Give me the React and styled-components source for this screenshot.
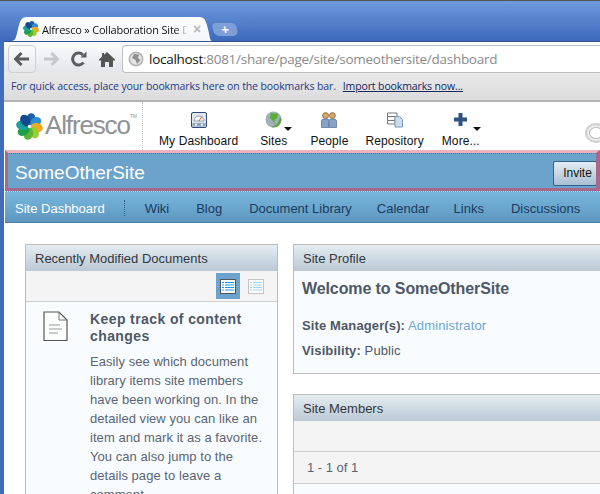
import React from 'react';
import styled, { createGlobalStyle } from 'styled-components';

const GlobalStyle = createGlobalStyle`
    html, body {
        margin: 0;
        padding: 0;
        background: #fff;
    }
    body {
        font-family: "Liberation Sans", Arial, sans-serif;
    }
`;

const PETALS = ['#1d5fa8', '#2f8fd0', '#f4a81c', '#9ccb3a', '#5bb531', '#1e9e4a', '#17a2a0', '#12498f'];

const Flower = ({ size }) => (
    <svg width={size} height={size} viewBox="0 0 32 32">
        {PETALS.map((color, i) => (
            <ellipse key={color} cx="16" cy="7.5" rx="5.6" ry="7.5" fill={color} transform={`rotate(${i * 45 + 10} 16 16)`} />
        ))}
        <circle cx="16" cy="16" r="2" fill="#fff" />
    </svg>
);

const BackIcon = () => (
    <svg width="16" height="14" viewBox="0 0 16 14">
        <path d="M7.5 1 L1.5 7 L7.5 13 M2 7 H15" fill="none" stroke="#5c5c5c" strokeWidth="3" />
    </svg>
);

const ForwardIcon = () => (
    <svg width="16" height="14" viewBox="0 0 16 14">
        <path d="M8.5 1 L14.5 7 L8.5 13 M14 7 H1" fill="none" stroke="#c4c6c8" strokeWidth="3" />
    </svg>
);

const ReloadIcon = () => (
    <svg width="16" height="16" viewBox="0 0 16 16">
        <path d="M12.5 11.5 A6 6 0 1 1 12 4" fill="none" stroke="#5c5c5c" strokeWidth="3" />
        <path d="M9.5 6.5 H15.5 V0.5 Z" fill="#5c5c5c" />
    </svg>
);

const HomeIcon = () => (
    <svg width="16" height="15" viewBox="0 0 16 15">
        <path d="M8 0 L16 7.5 V8.5 H14 V15 H10 V10 H6 V15 H2 V8.5 H0 V7.5 L3 4.6 V1 H5 V2.8 Z" fill="#555" />
    </svg>
);

const GlobeSmall = () => (
    <svg width="16" height="16" viewBox="0 0 16 16">
        <circle cx="8" cy="8" r="7.5" fill="#b4b4b4" />
        <circle cx="8" cy="8" r="5.8" fill="#e6e6e6" />
        <path d="M6 3 L11 3.5 L10 7 L12.5 9 L9 13 L7.5 9 L4 7 Z" fill="#8e8e8e" />
    </svg>
);

const DashboardIcon = () => (
    <svg width="16" height="16" viewBox="0 0 16 16">
        <rect x="0.5" y="0.5" width="15" height="15" rx="1.5" fill="#dfe6ee" stroke="#2d4a78" />
        <path d="M3 9 A5 5 0 0 1 13 9 Z" fill="#fff" stroke="#7b8ba0" strokeWidth="0.8" />
        <path d="M8 9 L11 4.5" stroke="#d8492a" strokeWidth="1" />
        <rect x="1.5" y="11" width="13" height="3.5" fill="#8ea2bb" />
        <circle cx="5" cy="12.7" r="1.1" fill="#fff" />
        <circle cx="11" cy="12.7" r="1.1" fill="#fff" />
    </svg>
);

const GlobeIcon = () => (
    <svg width="17" height="17" viewBox="0 0 17 17">
        <circle cx="8.5" cy="8.5" r="8" fill="#9fb0b8" />
        <path d="M16.5 8.5 A8 8 0 0 1 6 16 C11 15 14 12 15 6 Z" fill="#5aa43a" />
        <path d="M6 2 L13 3 L12 7 L9.5 9 L10 13 L8 10 L5 7 Z" fill="#58b02e" />
    </svg>
);

const PeopleIcon = () => (
    <svg width="16" height="16" viewBox="0 0 16 16">
        <circle cx="4.6" cy="3.6" r="3" fill="#d2a76a" stroke="#8a5a2a" strokeWidth="0.7" />
        <circle cx="11.4" cy="3.6" r="3" fill="#d2a76a" stroke="#8a5a2a" strokeWidth="0.7" />
        <path d="M0.5 15.5 V9 Q0.5 7 3 7 H6.5 Q7.8 7 7.8 9 V15.5 Z" fill="#86a4c8" stroke="#4f6d92" strokeWidth="0.7" />
        <path d="M8.2 15.5 V9 Q8.2 7 10 7 H13 Q15.5 7 15.5 9 V15.5 Z" fill="#86a4c8" stroke="#4f6d92" strokeWidth="0.7" />
    </svg>
);

const RepositoryIcon = () => (
    <svg width="16" height="16" viewBox="0 0 16 16">
        <path d="M0.5 1 H10 V4.5 H0.5 Z M0.5 4.5 H8 V8.5 H0.5 Z M0.5 8.5 H8 V12 H0.5 Z" fill="#fff" stroke="#777" />
        <path d="M8 4.5 H12.5 L15.5 7.5 V15 H8 Z" fill="#c9dcf0" stroke="#7f99b8" />
    </svg>
);

const PlusIcon = () => (
    <svg width="13" height="13" viewBox="0 0 13 13">
        <path d="M4.5 0 H8.5 V4.5 H13 V8.5 H8.5 V13 H4.5 V8.5 H0 V4.5 H4.5 Z" fill="#2e5382" />
    </svg>
);

const DocIcon = () => (
    <svg width="25" height="31" viewBox="0 0 25 31">
        <path d="M1 1 H16 L24 9 V29.5 H1 Z" fill="#fbfcfc" stroke="#555" strokeWidth="1.2" />
        <path d="M16 1 V9 H24" fill="none" stroke="#777" />
        <path d="M6 14 H17 M6 18 H19 M6 22 H15" stroke="#999" strokeWidth="1" />
    </svg>
);

const ListIcon = ({ muted }) => (
    <svg width="16" height="15" viewBox="0 0 16 15">
        <rect x="0.5" y="0.5" width="15" height="14" fill={muted ? '#fafcfe' : '#fff'} stroke={muted ? '#c4c4c4' : '#555'} />
        <path
            d="M5 3.5 H14 M5 6 H14 M5 8.5 H14 M5 11 H14 M2 3.5 H4 M2 6 H4 M2 8.5 H4 M2 11 H4"
            stroke={muted ? '#9fd4f5' : '#1a97ef'}
            strokeWidth="1.2"
        />
    </svg>
);

const Shot = styled.div`
    position: relative;
    width: 600px;
    height: 494px;
    overflow: hidden;
    background: #3f6cbd;
    border-top: 1px solid #555;
    box-sizing: border-box;
    padding-left: 4px;
`;

const TabStrip = styled.div`
    height: 40px;
    margin-left: -4px;
    padding: 16px 0 0 11px;
    box-sizing: border-box;
    display: flex;
    align-items: flex-end;
    background: linear-gradient(#6f9ade, #3c69bb);
`;

const Tab = styled.div`
    width: 201px;
    height: 24px;
    padding: 0 0 0 12px;
    box-sizing: border-box;
    display: flex;
    align-items: center;
    gap: 3px;
    background: linear-gradient(#fff, #f3f5f9);
    clip-path: path('M0 24 C5 24 5 20 7 12 C9 4 10 0 16 0 H188 C194 0 195 4 197 12 C199 20 199 24 201 24 Z');
`;

const TabLabel = styled.span`
    width: 146px;
    white-space: nowrap;
    font-family: "Open Sans", sans-serif;
    font-size: 11px;
    letter-spacing: -0.2px;
    color: #111;
    mask-image: linear-gradient(to right, #000 134px, transparent 146px);
`;

const TabClose = styled.span`
    font-size: 14px;
    color: #b8b8b8;
    font-weight: bold;
    margin-left: 2px;
`;

const NewTab = styled.div`
    width: 24px;
    height: 13px;
    margin: 0 0 5px 1px;
    display: flex;
    align-items: center;
    justify-content: center;
    border-radius: 4px 4px 5px 5px;
    color: #fff;
    font-size: 13px;
    font-weight: bold;
    background: #7d9ed8;
    transform: skewX(12deg);
`;

const Toolbar = styled.div`
    height: 31px;
    padding: 3px 0 0 4px;
    box-sizing: border-box;
    display: flex;
    align-items: flex-start;
    background: linear-gradient(#fbfcfe, #e3e5e8);
    border-top: 1px solid #33558f;
`;

const BackButton = styled.div`
    width: 26px;
    height: 26px;
    display: flex;
    align-items: center;
    justify-content: center;
    border: 1px solid #cdcfd2;
    border-radius: 4px;
    background: linear-gradient(#fafbfc, #e6e7e9);
`;

const ToolButton = styled.div`
    width: ${(p) => p.$w}px;
    height: 28px;
    display: flex;
    align-items: center;
    justify-content: center;
`;

const UrlBox = styled.div`
    flex: 1;
    height: 26px;
    margin-left: 2px;
    padding-left: 5px;
    display: flex;
    align-items: center;
    gap: 5px;
    background: #fff;
    border: 1px solid #bcbec2;
    border-right: 0;
    border-radius: 4px 0 0 4px;
`;

const UrlText = styled.span`
    font-family: "Open Sans", sans-serif;
    font-size: 13.5px;
    letter-spacing: -0.28px;
    color: #8a8a8a;
    white-space: nowrap;

    b {
        font-weight: normal;
        color: #111;
    }
`;

const BookmarkBar = styled.div`
    height: 28px;
    padding-left: 7px;
    display: flex;
    align-items: center;
    gap: 7px;
    background: linear-gradient(#e9e9e9, #dcdcdc);
    font-family: "Open Sans", sans-serif;
    font-size: 10.5px;
    letter-spacing: -0.12px;
    color: #1f3a86;
    white-space: nowrap;
`;

const ImportLink = styled.a`
    color: #12285f;
    text-decoration: underline;
`;

const Page = styled.div`
    background: #fff;
    border-top: 2px solid #b4b4b4;
    height: 393px;
`;

const TopBar = styled.div`
    height: 48px;
    display: flex;
`;

const LogoCell = styled.div`
    width: 139px;
    padding-left: 12px;
    box-sizing: border-box;
    display: flex;
    align-items: center;
    gap: 2px;
    border-right: 1px dotted #c8c8c8;
`;

const LogoText = styled.span`
    font-size: 26px;
    letter-spacing: -1.15px;
    color: #8f9294;
    position: relative;
    top: -1px;

    sup {
        font-size: 5px;
        letter-spacing: 0;
        vertical-align: 16px;
    }
`;

const MainNav = styled.div`
    flex: 1;
    display: flex;
    padding-left: 16px;
`;

const MainItem = styled.div`
    position: relative;
    display: flex;
    flex-direction: column;
    align-items: center;
    justify-content: flex-end;
    height: 46px;
    gap: 6px;
    margin-left: ${(p) => p.$gap || 0}px;
    font-size: 12px;
    letter-spacing: 0.1px;
    color: #111;
    white-space: nowrap;
`;

const IconSlot = styled.div`
    height: 17px;
    display: flex;
    align-items: center;
`;

const Caret = styled.span`
    position: absolute;
    right: ${(p) => p.$right}px;
    top: 25px;
    width: 0;
    height: 0;
    border: 4px solid transparent;
    border-top-color: #111;
    border-bottom: 0;
`;

const SearchRing = styled.div`
    position: absolute;
    left: 585px;
    top: 122px;
    width: 22px;
    height: 20px;
    border-radius: 50%;
    border: 2px solid #d0d0d0;
    box-sizing: border-box;
    background: #fff;
    box-shadow: inset 0 0 0 2px #eee, inset 0 0 0 3px #b8b8b8;
`;

const TitleBar = styled.div`
    position: relative;
    height: 41px;
    margin-left: 1px;
    padding: 5px 3px 0 10px;
    box-sizing: border-box;
    display: flex;
    align-items: center;
    justify-content: space-between;
    background: #6ba3cc;

    &::before {
        content: '';
        position: absolute;
        left: 0;
        right: 0;
        top: 3px;
        border-top: 1px dotted #56779c;
    }

    &::after {
        content: '';
        position: absolute;
        inset: 0;
        border-style: solid;
        border-width: 3px 4px 3px 3px;
        border-color: #eeb2ba #a9688a #a9688a #a9688a;
    }
`;

const SiteTitle = styled.span`
    font-size: 19px;
    color: #fff;
`;

const InviteButton = styled.button`
    width: 44px;
    height: 25px;
    padding: 0 0 0 5px;
    font-family: inherit;
    font-size: 12px;
    color: #111;
    border: 1px solid #2f6189;
    border-radius: 2px;
    background: linear-gradient(#e4ecf3, #a9bfd4);
`;

const SiteNav = styled.div`
    height: 32px;
    margin-left: 1px;
    padding: 2px 0 0 10px;
    box-sizing: border-box;
    display: flex;
    align-items: center;
    font-size: 13px;
    color: #1d3a5c;
    white-space: nowrap;
    background: linear-gradient(#78b7de, #5d97c0);
    border-top: 1px dotted #cfe4f3;
    border-bottom: 1px solid #4c7da3;
`;

const SiteLink = styled.span`
    margin-left: ${(p) => p.$gap || 0}px;
    color: ${(p) => (p.$active ? '#fff' : 'inherit')};
`;

const NavDivider = styled.span`
    width: 1px;
    height: 16px;
    margin-left: 19px;
    border-left: 1px dotted #2f5f86;
`;

const Columns = styled.div`
    display: grid;
    grid-template-columns: 253px 340px;
    gap: 15px;
    padding: 21px 0 0 21px;
    align-items: start;
`;

const Stack = styled.div`
    display: flex;
    flex-direction: column;
    gap: 20px;
`;

const Dashlet = styled.div`
    border: 1px solid #bcbcbc;
    background: #f8fcfe;
    height: ${(p) => p.$h}px;
    box-sizing: border-box;
    overflow: hidden;
`;

const DashletTitle = styled.div`
    height: 26px;
    padding-left: 9px;
    display: flex;
    align-items: center;
    font-size: 13px;
    color: #33383f;
    background: linear-gradient(#e4ecf1, #bbc9d5);
`;

const DashletTools = styled.div`
    height: 31px;
    box-sizing: border-box;
    display: flex;
    align-items: center;
    justify-content: flex-end;
    padding: 2px 13px 2px 0;
    gap: 8px;
    background: #f4f4f4;
    border-bottom: 1px solid #cfcfcf;
`;

const ActiveTool = styled.div`
    width: 24px;
    height: 26px;
    display: flex;
    align-items: center;
    justify-content: center;
    background: #6ba3cc;
`;

const HelpBody = styled.div`
    display: grid;
    grid-template-columns: 47px 1fr;
    padding: 9px 10px 0 17px;
`;

const HelpHeading = styled.div`
    font-size: 14px;
    font-weight: bold;
    line-height: 17px;
    color: #4f5866;
    letter-spacing: 0.4px;
    margin-bottom: 7px;
`;

const HelpText = styled.div`
    font-size: 13px;
    line-height: 19px;
    color: #5b6472;
    letter-spacing: 0.05px;
`;

const ProfileBody = styled.div`
    padding: 9px 8px 8px;
    font-size: 13px;
    color: #4f5866;
`;

const Welcome = styled.div`
    font-size: 16px;
    font-weight: bold;
    letter-spacing: -0.1px;
    color: #4f5866;
    margin-bottom: 20px;
`;

const ProfileRow = styled.div`
    margin-bottom: 9px;
    line-height: 16px;
    letter-spacing: 0.12px;

    a {
        color: #6ea5d2;
    }
`;

const MembersTools = styled.div`
    height: 31px;
    box-sizing: border-box;
    background: #f4f4f4;
    border-bottom: 1px solid #cfcfcf;
`;

const MembersPager = styled.div`
    height: 32px;
    box-sizing: border-box;
    padding-left: 13px;
    display: flex;
    align-items: center;
    font-size: 13px;
    color: #5b6472;
    background: #f4f4f4;
    border-bottom: 1px solid #cfcfcf;
`;

export default function App() {
    return (
        <Shot>
            <GlobalStyle />
            <TabStrip>
                <Tab>
                    <Flower size={16} />
                    <TabLabel>Alfresco » Collaboration Site D</TabLabel>
                    <TabClose>×</TabClose>
                </Tab>
                <NewTab>+</NewTab>
            </TabStrip>
            <Toolbar>
                <BackButton><BackIcon /></BackButton>
                <ToolButton $w={29}><ForwardIcon /></ToolButton>
                <ToolButton $w={28}><ReloadIcon /></ToolButton>
                <ToolButton $w={27}><HomeIcon /></ToolButton>
                <UrlBox>
                    <GlobeSmall />
                    <UrlText><b>localhost</b>:8081/share/page/site/someothersite/dashboard</UrlText>
                </UrlBox>
            </Toolbar>
            <BookmarkBar>
                <span>For quick access, place your bookmarks here on the bookmarks bar.</span>
                <ImportLink>Import bookmarks now...</ImportLink>
            </BookmarkBar>
            <Page>
                <TopBar>
                    <LogoCell>
                        <Flower size={27} />
                        <LogoText>Alfresco<sup>TM</sup></LogoText>
                    </LogoCell>
                    <MainNav>
                        <MainItem><IconSlot><DashboardIcon /></IconSlot>My Dashboard</MainItem>
                        <MainItem $gap={22}><IconSlot><GlobeIcon /></IconSlot>Sites<Caret $right={-5} /></MainItem>
                        <MainItem $gap={23}><IconSlot><PeopleIcon /></IconSlot>People</MainItem>
                        <MainItem $gap={17}><IconSlot><RepositoryIcon /></IconSlot>Repository</MainItem>
                        <MainItem $gap={18}><IconSlot><PlusIcon /></IconSlot>More...<Caret $right={-1} /></MainItem>
                    </MainNav>
                </TopBar>
                <TitleBar>
                    <SiteTitle>SomeOtherSite</SiteTitle>
                    <InviteButton>Invite</InviteButton>
                </TitleBar>
                <SiteNav>
                    <SiteLink $active>Site Dashboard</SiteLink>
                    <NavDivider />
                    <SiteLink $gap={19}>Wiki</SiteLink>
                    <SiteLink $gap={27}>Blog</SiteLink>
                    <SiteLink $gap={27}>Document Library</SiteLink>
                    <SiteLink $gap={25}>Calendar</SiteLink>
                    <SiteLink $gap={24}>Links</SiteLink>
                    <SiteLink $gap={27}>Discussions</SiteLink>
                </SiteNav>
                <Columns>
                    <Dashlet $h={260}>
                        <DashletTitle>Recently Modified Documents</DashletTitle>
                        <DashletTools>
                            <ActiveTool><ListIcon /></ActiveTool>
                            <ListIcon muted />
                        </DashletTools>
                        <HelpBody>
                            <DocIcon />
                            <div>
                                <HelpHeading>Keep track of content changes</HelpHeading>
                                <HelpText>
                                    Easily see which document library items site members have been working on. In the detailed view you can like an item and mark it as a favorite. You can also jump to the details page to leave a comment.
                                </HelpText>
                            </div>
                        </HelpBody>
                    </Dashlet>
                    <Stack>
                        <Dashlet $h={130}>
                            <DashletTitle>Site Profile</DashletTitle>
                            <ProfileBody>
                                <Welcome>Welcome to SomeOtherSite</Welcome>
                                <ProfileRow><b>Site Manager(s):</b> <a>Administrator</a></ProfileRow>
                                <ProfileRow><b>Visibility:</b> Public</ProfileRow>
                            </ProfileBody>
                        </Dashlet>
                        <Dashlet $h={120}>
                            <DashletTitle>Site Members</DashletTitle>
                            <MembersTools />
                            <MembersPager>1 - 1 of 1</MembersPager>
                        </Dashlet>
                    </Stack>
                </Columns>
            </Page>
            <SearchRing />
        </Shot>
    );
}
